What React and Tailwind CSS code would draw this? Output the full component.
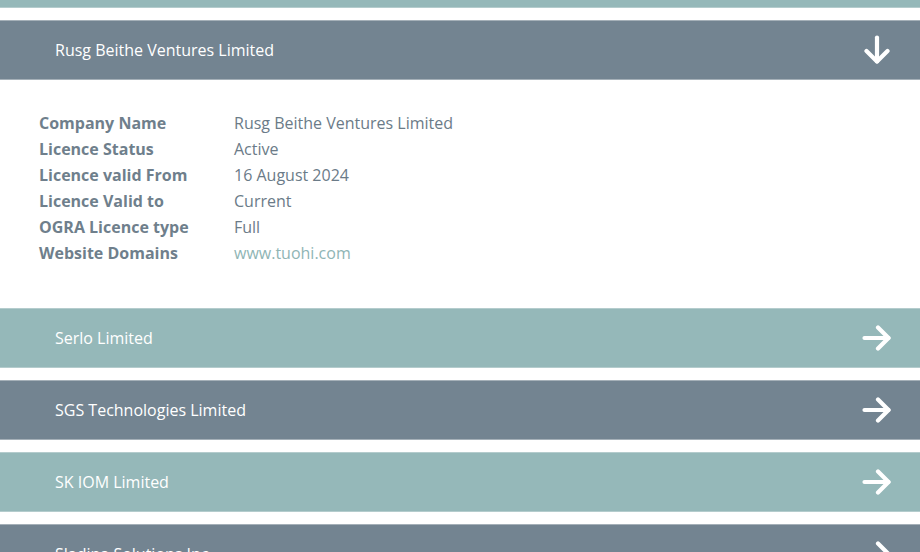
import React from 'react';

const ArrowRight = () => (
  <svg width="30" height="26" viewBox="0 0 30 26" fill="none" stroke="white" strokeWidth="4.2" strokeLinecap="round" strokeLinejoin="round">
    <path d="M2.5 13h24" />
    <path d="M16 2.5l10.5 10.5-10.5 10.5" />
  </svg>
);

const ArrowDown = () => (
  <svg width="26" height="30" viewBox="0 0 26 30" fill="none" stroke="white" strokeWidth="4.2" strokeLinecap="round" strokeLinejoin="round">
    <path d="M13 2.5v24" />
    <path d="M2.5 16l10.5 10.5 10.5-10.5" />
  </svg>
);

const details = [
  ['Company Name', 'Rusg Beithe Ventures Limited'],
  ['Licence Status', 'Active'],
  ['Licence valid From', '16 August 2024'],
  ['Licence Valid to', 'Current'],
  ['OGRA Licence type', 'Full'],
  ['Website Domains', 'www.tuohi.com', true],
];

const companies = [
  { name: 'Serlo Limited', tone: 'teal' },
  { name: 'SGS Technologies Limited', tone: 'slate' },
  { name: 'SK IOM Limited', tone: 'teal' },
  { name: 'Sladina Solutions Inc', tone: 'slate' },
];

const Bar = ({ name, tone, open }) => (
  <div
    className={`h-[60px] flex items-center justify-between pl-[55px] pr-[28px] border-y ${
      tone === 'teal' ? 'bg-[#95b8b9] border-[#b4cccd]' : 'bg-[#738491] border-[#a5b0b8]'
    }`}
  >
    <span className="text-white text-[16px] font-medium">{name}</span>
    {open ? <div className="pr-[2px]"><ArrowDown /></div> : <ArrowRight />}
  </div>
);

export default function App() {
  return (
    <div className="w-[920px] h-[552px] overflow-hidden bg-white" style={{ fontFamily: '"Open Sans", Lato, sans-serif' }}>
      <div className="-mt-[52px] flex flex-col gap-[12px]">
        <div className="h-[60px] bg-[#95b8b9] border-b border-[#b4cccd]" />
        <div>
          <Bar name="Rusg Beithe Ventures Limited" tone="slate" open />
          <div className="pl-[39px] pt-[30px] pb-[30px]">
            {details.map(([label, value, link]) => (
              <div key={label} className="flex h-[26px] items-center text-[16px]">
                <span className="w-[195px] font-bold text-[#6f7f8c]">{label}</span>
                <span className={link ? 'text-[#8fb5b5]' : 'text-[#6b7b88]'}>{value}</span>
              </div>
            ))}
          </div>
        </div>
        {companies.map((c) => (
          <Bar key={c.name} name={c.name} tone={c.tone} />
        ))}
      </div>
    </div>
  );
}
